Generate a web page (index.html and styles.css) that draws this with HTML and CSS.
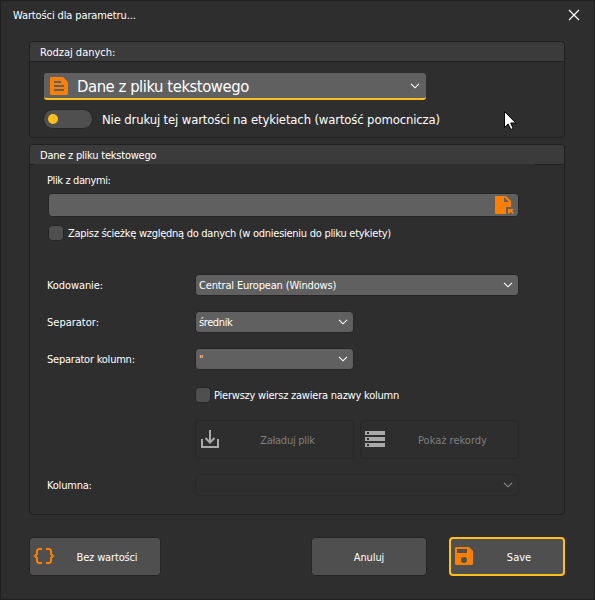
FILE: index.html
```html
<!doctype html>
<html lang="pl">

<head>
    <meta charset="utf-8">
    <meta name="viewport" content="width=device-width, initial-scale=1">
    <title>Wartości dla parametru...</title>
    <link rel="stylesheet" href="styles.css">
</head>

<body>
<main class="dialog">
    <header class="titlebar">
        <h1><span class="text t-title">Wartości dla parametru...</span></h1>
        <svg class="close" width="12" height="12" viewBox="0 0 12 12"><path d="M1 1l10 10M11 1L1 11"/></svg>
    </header>

    <section class="group source">
        <h2><span class="text">Rodzaj danych:</span></h2>
        <div class="group-body">
            <div class="select select-large">
                <svg class="icon" width="18" height="18" viewBox="0 0 18 18"><path fill-rule="evenodd" d="M1 0h12l5 5v12l-1 1H1l-1-1V1zM4 4v2h7V4zM4 8v2h10V8zM4 12v2h10v-2z"/></svg>
                <span class="text t-source">Dane z pliku tekstowego</span>
                <svg class="chevron" width="10" height="6" viewBox="0 0 10 6"><path d="M1 .8l4 4 4-4"/></svg>
            </div>
            <div class="switch-row">
                <span class="switch"></span>
                <span class="text t-switch">Nie drukuj tej wartości na etykietach (wartość pomocnicza)</span>
            </div>
        </div>
    </section>

    <section class="group file">
        <h2><span class="text t-file">Dane z pliku tekstowego</span></h2>
        <div class="group-body">
            <div class="file-label"><span class="text t-path">Plik z danymi:</span></div>
            <div class="file-input">
                <svg class="icon" width="20" height="18" viewBox="0 0 20 18"><path fill-rule="evenodd" d="M0 0h11l5 5v6h-5v7H0zM9 1v5h5z"/><path d="M13 13h6l-2 2 2 2-1 1-2-2-3 2z"/></svg>
            </div>
            <div class="check-row">
                <span class="checkbox"></span>
                <span class="text t-relative">Zapisz ścieżkę względną do danych (w odniesieniu do pliku etykiety)</span>
            </div>

            <div class="form">
                <span class="text t-encoding">Kodowanie:</span>
                <div class="select">
                    <span class="text t-central">Central European (Windows)</span>
                    <svg class="chevron" width="10" height="6" viewBox="0 0 10 6"><path d="M1 .8l4 4 4-4"/></svg>
                </div>

                <span class="text">Separator:</span>
                <div class="select short">
                    <span class="text t-semicolon">średnik</span>
                    <svg class="chevron" width="10" height="6" viewBox="0 0 10 6"><path d="M1 .8l4 4 4-4"/></svg>
                </div>

                <span class="text t-columns">Separator kolumn:</span>
                <div class="select short">
                    <span class="text quote">"</span>
                    <svg class="chevron" width="10" height="6" viewBox="0 0 10 6"><path d="M1 .8l4 4 4-4"/></svg>
                </div>
            </div>

            <div class="check-row header-check">
                <span class="checkbox"></span>
                <span class="text t-firstrow">Pierwszy wiersz zawiera nazwy kolumn</span>
            </div>

            <div class="actions">
                <button type="button" class="button" disabled>
                    <svg width="18" height="18" viewBox="0 0 18 18"><path class="line" d="M1 9v8h16V9M9 0v12M4.500 8L9 12.500 13.500 8"/></svg>
                    <span class="text t-load">Załaduj plik</span>
                </button>
                <button type="button" class="button records" disabled>
                    <svg width="20" height="16" viewBox="0 0 20 16"><path fill-rule="evenodd" d="M0 0h20v4H0zM2 1v2h2V1zM0 6h20v4H0zM2 7v2h2V7zM0 12h20v4H0zM2 13v2h2v-2z"/></svg>
                    <span class="text t-show">Pokaż rekordy</span>
                </button>
            </div>

            <div class="form column-form">
                <span class="text t-column">Kolumna:</span>
                <div class="select disabled">
                    <svg class="chevron" width="10" height="6" viewBox="0 0 10 6"><path d="M1 .8l4 4 4-4"/></svg>
                </div>
            </div>
        </div>
    </section>

    <footer class="footer">
        <button type="button" class="button none">
            <svg class="braces" width="20" height="16" viewBox="0 0 20 16"><path d="M8 1H4.500L3 2.500V6L1 8l2 2v3.500L4.500 15H8M12 1h3.500L17 2.500V6l2 2-2 2v3.500L15.500 15H12"/></svg>
            <span class="text t-none">Bez wartości</span>
        </button>
        <button type="button" class="button cancel"><span class="text t-cancel">Anuluj</span></button>
        <button type="submit" class="button save">
            <svg class="icon" width="18" height="18" viewBox="0 0 18 18"><path fill-rule="evenodd" d="M1 0h13l4 4v13l-1 1H1l-1-1V1zM2 2v4h10V2zM9 10a3 3 0 1 0 0 6 3 3 0 0 0 0-6z"/></svg>
            <span class="text t-save">Save</span>
        </button>
    </footer>

    <svg class="cursor" width="13" height="20" viewBox="0 0 13 20"><path d="M.5.5v16l3.700-3.500 2.600 5.500 2.400-1.100L6.700 12h5.100z"/></svg>
</main>
</body>
</html>
```
FILE: styles.css
```css
:root {
    --color-bg: #2e2e2e;
    --color-header: #3b3b3b;
    --color-line: #202020;
    --color-field: #606060;
    --color-button: #4f4f4f;
    --color-text: #fff;
    --color-accent: #ffc01e;
    --color-icon: #ff8000;
}

*, *::before, *::after {
    box-sizing: border-box;
}

body {
    margin: 0;
    font: 11px/14px Tahoma, "DejaVu Sans Condensed", "DejaVu Sans", sans-serif;
    font-stretch: condensed;
    color: var(--color-text);
    background: var(--color-bg);
}

svg {
    flex: none;
    display: block;
}

.dialog {
    position: relative;
    width: 595px;
    height: 600px;
    border: 1px solid var(--color-line);
    background: var(--color-bg);
}

/* Text, with tracking tightened per string */
.text {
    display: block;
    padding-top: 2px;
    white-space: nowrap;
}

.t-title { letter-spacing: -0.12px; }
.t-source { letter-spacing: -0.45px; }
.t-switch { letter-spacing: -0.155px; }
.t-file { letter-spacing: -0.22px; }
.t-path { letter-spacing: -0.38px; }
.t-relative { letter-spacing: -0.27px; }
.t-encoding { letter-spacing: -0.1px; }
.t-central { letter-spacing: -0.16px; }
.t-semicolon { letter-spacing: -0.4px; }
.t-columns { letter-spacing: -0.23px; }
.t-firstrow { letter-spacing: -0.22px; }
.t-load { letter-spacing: -0.25px; }
.t-column { letter-spacing: -0.2px; }
.t-none { letter-spacing: -0.15px; }
.t-cancel { letter-spacing: -0.1px; }

.titlebar {
    display: flex;
    align-items: center;
    justify-content: space-between;
    height: 40px;
    padding: 0 14px 12px 12px;
}

h1, h2 {
    margin: 0;
    font-size: 11px;
    font-weight: normal;
}

.close {
    fill: none;
    stroke: #fff;
    stroke-width: 1.2;
}

.icon {
    fill: var(--color-icon);
}

/* Group boxes */
.group {
    margin: 0 29px 0 28px;
    border: 1px solid var(--color-line);
    border-radius: 4px;
}

.group h2 {
    display: flex;
    align-items: center;
    height: 20px;
    padding-left: 10px;
    border-bottom: 1px solid var(--color-line);
    border-radius: 3px 3px 0 0;
    background: var(--color-header);
}

.source {
    height: 97px;
}

.source .group-body {
    padding: 11px 14px;
}

.file {
    height: 371px;
    margin-top: 6px;
}

.file h2 {
    border-image: linear-gradient(to right, var(--color-line) 5px, var(--color-bg) 5px, var(--color-bg) 504px, var(--color-line) 504px) 1;
}

.file .group-body {
    padding: 8px 45px 0 18px;
}

.file-label {
    height: 14px;
    margin-left: -1px;
}

.file-label .text {
    padding-top: 1px;
}

/* Fields */
.select {
    display: flex;
    align-items: center;
    height: 22px;
    padding: 0 5px 0 3px;
    border: 1px solid #252525;
    border-radius: 4px;
    background: var(--color-field);
}

.chevron {
    margin-left: auto;
    fill: none;
    stroke: #fff;
    stroke-width: 1.1;
}

.short {
    width: 159px;
}

.select.disabled {
    border-color: #292929;
    background: none;
}

.disabled .chevron {
    stroke: #8c8c8c;
}

.select-large {
    width: 382px;
    height: 27px;
    padding: 0 6px;
    border: 0;
    border-bottom: 2px solid var(--color-accent);
    border-radius: 3px;
    font-size: 16.5px;
    line-height: 22px;
}

.select-large .icon {
    margin-right: 9px;
}

.switch-row {
    display: flex;
    align-items: center;
    gap: 9px;
    height: 20px;
    margin: 9px 0 0 -1px;
    font-size: 13px;
}

.switch {
    width: 50px;
    height: 20px;
    padding: 4px;
    border: 1px solid #252525;
    border-radius: 10px;
    background: var(--color-button);
}

.switch::before {
    content: "";
    display: block;
    width: 10px;
    height: 10px;
    border-radius: 50%;
    background: var(--color-accent);
}

.file-input {
    display: flex;
    align-items: center;
    justify-content: flex-end;
    width: 471px;
    height: 24px;
    margin-top: 6px;
    padding-right: 3px;
    border: 1px solid #252525;
    border-radius: 4px;
    background: var(--color-field);
}

.check-row {
    display: flex;
    align-items: center;
    gap: 4px;
    height: 16px;
    margin-top: 8px;
}

.checkbox {
    width: 16px;
    height: 16px;
    border: 1px solid #252525;
    border-radius: 4px;
    background: var(--color-button);
}

.form {
    display: grid;
    grid-template-columns: 148px 324px;
    row-gap: 15px;
    align-items: center;
    margin: 33px 0 0 -1px;
}

.quote {
    color: #ffcfae;
}

.header-check {
    margin: 17px 0 0 147px;
    gap: 3px;
}

.actions {
    display: flex;
    gap: 6px;
    margin: 17px 0 0 147px;
}

.column-form {
    margin-top: 15px;
}

/* Buttons */
.button {
    display: flex;
    align-items: center;
    height: 39px;
    padding: 0 4px;
    border: 1px solid #252525;
    border-radius: 4px;
    background: var(--color-button);
    color: var(--color-text);
    font: inherit;
    font-stretch: condensed;
}

.button svg {
    margin-bottom: 2px;
}

.button .text {
    flex: 1;
    text-align: center;
}

.button .t-load {
    padding-left: 7px;
}

.button .t-show {
    padding-left: 6px;
}

.button .t-none {
    padding-left: 4px;
}

.button .t-save {
    padding-left: 6px;
}

.button:disabled {
    width: 159px;
    padding-left: 5px;
    border-color: #292929;
    background: none;
    color: #7f7f7f;
    fill: #a9a9a9;
}

.button.records {
    padding-left: 4px;
}

.line {
    fill: none;
    stroke: #a9a9a9;
    stroke-width: 2;
}

.footer {
    display: flex;
    margin: 22px 29px 0 28px;
}

.none {
    width: 132px;
}

.cancel {
    width: 116px;
    margin-left: 150px;
}

.save {
    width: 116px;
    margin-left: auto;
    border: 2px solid var(--color-accent);
}

.braces {
    fill: none;
    stroke: var(--color-icon);
    stroke-width: 2;
}

/* Mouse pointer over the dialog */
.cursor {
    position: absolute;
    left: 503px;
    top: 110px;
    fill: #fff;
    stroke: #000;
}
```
